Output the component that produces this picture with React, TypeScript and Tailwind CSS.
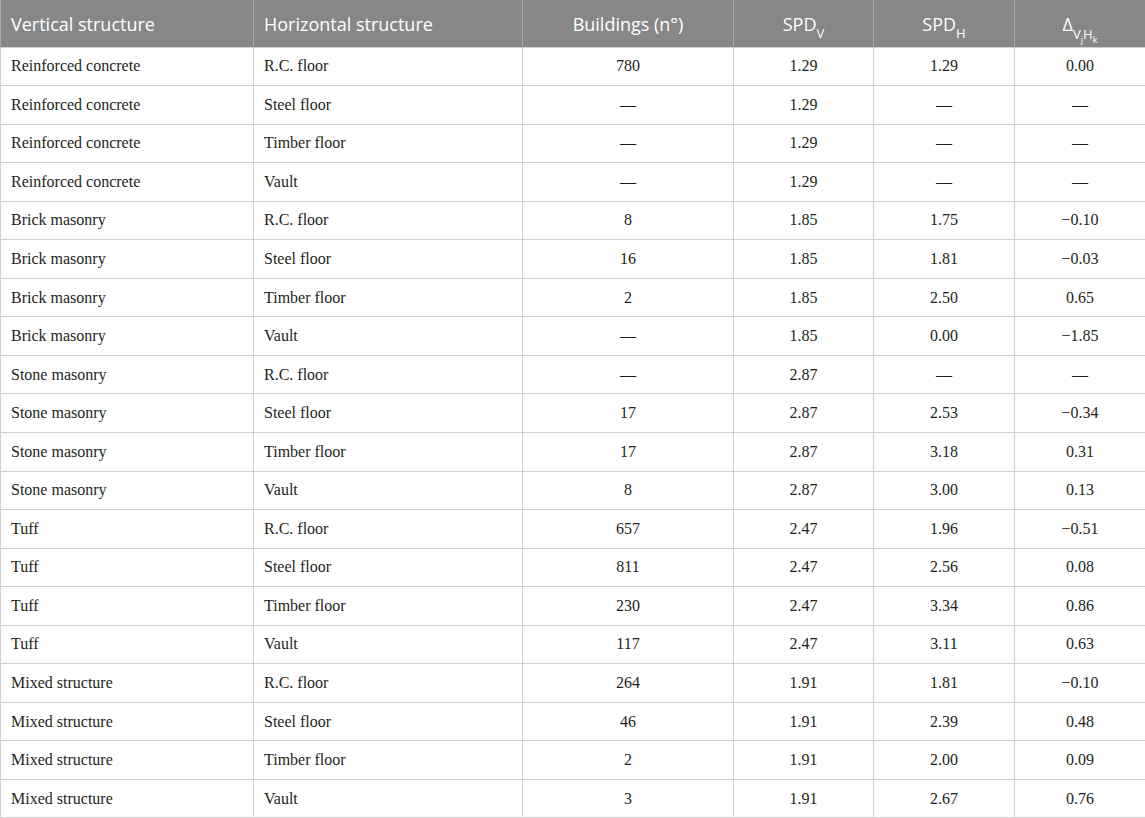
const rows: [string, string, string, string, string, string][] = [
  ['Reinforced concrete', 'R.C. floor', '780', '1.29', '1.29', '0.00'],
  ['Reinforced concrete', 'Steel floor', '—', '1.29', '—', '—'],
  ['Reinforced concrete', 'Timber floor', '—', '1.29', '—', '—'],
  ['Reinforced concrete', 'Vault', '—', '1.29', '—', '—'],
  ['Brick masonry', 'R.C. floor', '8', '1.85', '1.75', '−0.10'],
  ['Brick masonry', 'Steel floor', '16', '1.85', '1.81', '−0.03'],
  ['Brick masonry', 'Timber floor', '2', '1.85', '2.50', '0.65'],
  ['Brick masonry', 'Vault', '—', '1.85', '0.00', '−1.85'],
  ['Stone masonry', 'R.C. floor', '—', '2.87', '—', '—'],
  ['Stone masonry', 'Steel floor', '17', '2.87', '2.53', '−0.34'],
  ['Stone masonry', 'Timber floor', '17', '2.87', '3.18', '0.31'],
  ['Stone masonry', 'Vault', '8', '2.87', '3.00', '0.13'],
  ['Tuff', 'R.C. floor', '657', '2.47', '1.96', '−0.51'],
  ['Tuff', 'Steel floor', '811', '2.47', '2.56', '0.08'],
  ['Tuff', 'Timber floor', '230', '2.47', '3.34', '0.86'],
  ['Tuff', 'Vault', '117', '2.47', '3.11', '0.63'],
  ['Mixed structure', 'R.C. floor', '264', '1.91', '1.81', '−0.10'],
  ['Mixed structure', 'Steel floor', '46', '1.91', '2.39', '0.48'],
  ['Mixed structure', 'Timber floor', '2', '1.91', '2.00', '0.09'],
  ['Mixed structure', 'Vault', '3', '1.91', '2.67', '0.76'],
];

const th = 'border-x border-[#a9a9a9] px-[10px] pt-[3px] font-normal text-white';
const td = 'border border-[#cfcfcf] px-[10px] text-[16px] text-[#231f20]';

export default function App() {
  return (
    <div className="w-[1145px] h-[818px] bg-white overflow-hidden">
      <table className="w-[1145px] table-fixed border-collapse">
        <colgroup>
          <col className="w-[253px]" />
          <col className="w-[269px]" />
          <col className="w-[211px]" />
          <col className="w-[140px]" />
          <col className="w-[141px]" />
          <col className="w-[131px]" />
        </colgroup>
        <thead>
          <tr className="h-[47px] bg-[#878787] text-[18px] font-['Open_Sans',sans-serif]">
            <th className={`${th} text-left`}>Vertical structure</th>
            <th className={`${th} text-left`}>Horizontal structure</th>
            <th className={`${th} text-center`}>Buildings (n°)</th>
            <th className={`${th} text-center`}>
              SPD<sub className="text-[13px] align-[-3px]">V</sub>
            </th>
            <th className={`${th} text-center`}>
              SPD<sub className="text-[13px] align-[-3px]">H</sub>
            </th>
            <th className={`${th} text-center`}>
              Δ
              <sub className="text-[13px] align-[-4px]">
                V<sub className="text-[9px] align-[-2px]">j</sub>H
                <sub className="text-[9px] align-[-2px]">k</sub>
              </sub>
            </th>
          </tr>
        </thead>
        <tbody className="font-['Liberation_Serif',serif]">
          {rows.map((r, i) => (
            <tr key={i} className="h-[38.55px]">
              <td className={`${td} text-left`}>{r[0]}</td>
              <td className={`${td} text-left`}>{r[1]}</td>
              <td className={`${td} text-center`}>{r[2]}</td>
              <td className={`${td} text-center`}>{r[3]}</td>
              <td className={`${td} text-center`}>{r[4]}</td>
              <td className={`${td} text-center`}>{r[5]}</td>
            </tr>
          ))}
        </tbody>
      </table>
    </div>
  );
}
